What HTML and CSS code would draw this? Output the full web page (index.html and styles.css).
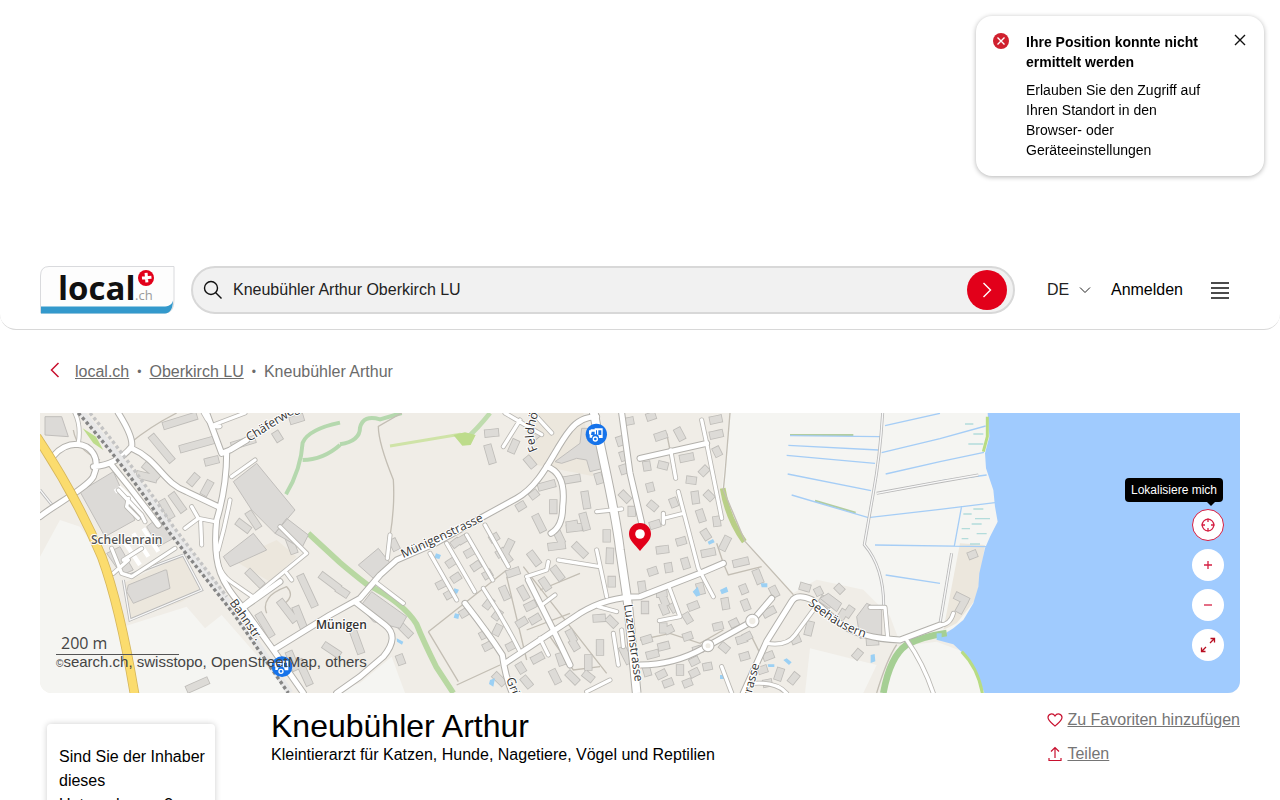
FILE: index.html
```html
<!DOCTYPE html>
<html lang="de">
<head>
<meta charset="utf-8">
<meta name="viewport" content="width=device-width, initial-scale=1">
<title>Kneubühler Arthur - local.ch</title>
<link rel="stylesheet" href="styles.css">
</head>
<body>
<div class="ad-slot"></div>

<header class="header">
  <a class="logo" href="#" aria-label="local.ch">
    <svg width="135" height="48" viewBox="0 0 135 48">
      <path d="M.5 47V10Q.5.5 9 .5h125V34q0 13-9 13Z" fill="#fdfdfd" stroke="#d9dadd"/>
      <path d="M1 40.500h122c6 0 9-2 10-6 0 8-3 13-8 13H1Z" fill="#3399cc"/>
      <text class="logo-name" x="18" y="34">local</text>
      <text class="logo-tld" x="95" y="34">.ch</text>
      <circle cx="106" cy="12" r="8" fill="#e2001a"/>
      <path d="M106.500 7v9.500M102 11.700h9.500" stroke="#fff" stroke-width="3" transform="rotate(-5 106 12)"/>
    </svg>
  </a>
  <form class="search">
    <svg class="search-icon" width="20" height="20" viewBox="0 0 20 20"><circle cx="8" cy="8" r="6.500"/><path d="m12.500 12.500 6 6"/></svg>
    <input class="search-input" type="text" aria-label="Suche" value="Kneubühler Arthur Oberkirch LU">
    <button class="search-button" type="button" aria-label="Suchen"><svg width="10" height="16" viewBox="0 0 10 16"><path d="m1.500 1 7 7-7 7"/></svg></button>
  </form>
  <label class="language">
    <select aria-label="Sprache"><option>DE</option></select>
    <svg width="12" height="8" viewBox="0 0 12 8"><path d="m1 1.500 5 5 5-5"/></svg>
  </label>
  <a class="login" href="#">Anmelden</a>
  <button class="menu" type="button" aria-label="Menü"><svg width="20" height="18" viewBox="0 0 20 18"><path d="M1 2h18M1 7h18M1 12h18M1 17h18"/></svg></button>
</header>

<main class="page">
  <nav class="breadcrumb" aria-label="Breadcrumb">
    <svg width="10" height="16" viewBox="0 0 10 16"><path d="m8.500 1-7 7 7 7"/></svg>
    <a href="#">local.ch</a><span class="dot">•</span><a href="#">Oberkirch LU</a><span class="dot">•</span><span>Kneubühler Arthur</span>
  </nav>

  <section class="map" aria-label="Karte">
    <svg class="map-canvas" viewBox="0 9 3600 840" preserveAspectRatio="xMidYMid slice">
      <defs>
        <g id="lanes">
          <path d="M105 9C120 40 120 70 115 100M250 450l55-35M215 415l30 75 30 10 130-85M220 490l45-40"/>
          <path d="M235 240l70 75 10 20M265 265l-5 25 35 35M455 290l20 35-40 30M475 325l50 10M482 335l3 70M570 270q-15 80-35 150M720 350l80 80-190 155M740 490l15 20M575 200l70-50M490 9q25 50 50 40M520 45l95-36M530 420q0 70 50 100l65 45"/>
          <path d="M1050 375l-8 70M1005 515l85 65M1170 430l80 140M1220 400l84 145M1280 375l78 135M1335 345l70 125M1330 535q60 90 110 190M1505 585l40-30M1460 500l60-20 5-25M1555 450l125 20M1670 420l30 140M1675 590l55 15M1670 305l75-8M1395 9l110 65M1440 30l-50 80M1480 9l55 60M1500 685l25 50M1640 845l70-35M1720 670l15 95M1745 660l5 50"/>
          <path d="M1892 120l15 85M1915 245l60 230 45 85M1870 325l60-15M1870 310v30M1885 525l35 95-62 12M1985 30l15 70 45 225M2045 770l30 79M2140 820q70-5 100 30M2180 700q60 10 85-25l55-75M2490 592h45l8 90M2700 645q30 0 40-35M2600 690q50 70 80 160"/>
        </g>
        <g id="roads">
          <path d="M0 320C35 290 140 235 160 200 185 140 150 105 110 103Q70 103 40 138M160 170Q230 165 275 110 280 80 235 9M215 165Q285 250 355 345M275 115C355 150 370 220 440 245L535 290M500 9L545 130 570 120 620 90M560 130Q560 230 530 330C515 480 550 520 610 595L700 720 790 849M600 600l120-85M700 720l170-105 90-50 60-70 50-45 115-50L1330 320 1430 265C1510 220 1540 120 1590 60Q1620 20 1670 20"/>
          <path d="M945 575l90 70Q1080 680 1030 740L960 800 890 849M1520 170q60 20 48 120 0 60-35 80M1275 580q70 90 112 155 10 70 30 114M1395 760L1620 610Q1700 560 1800 560L1980 490 2050 460M1465 510l75 150 50 105M1745 9l25 180 35 150M1800 145l200-45M1800 765q100 0 190-50l145-80 60-70M2110 849l70-155 75-120q15-25 60-5L2400 640Q2460 685 2580 690L2700 645"/>
        </g>
        <path id="highway" d="M1660 0C1690 160 1725 290 1740 420L1765 590 1790 849"/>
        <g id="houses">
          <path d="M380 45l80-25M340 85l50 60M320 170l30 25M430 115l90-25M505 155l20-5M455 215l10-12M495 245l12-22M370 280l20 35M400 260l25 35M300 195l40 10M600 340l20 15M630 315l20 30M745 380l15 40M660 620l30 50M725 580l35 45M770 600l20 50M785 505l35 75M850 500l40 30M630 490l30 30M585 105l50-15M710 75l5 8M760 30l20-6M750 735l15 35M780 760l25 55M860 710l30 20M450 835l45-20"/>
          <path d="M1060 398l6 12M1345 70l20-2M1345 115l10 35M1425 100l-8 18M1475 65l10 12M1465 150l10 12M1505 230l30-8M1540 280v20M1580 210l30-5M1635 255l5 30M1630 320l8 30M1590 345l12-2M1490 325l15 30M1550 365l12 25M1440 290l5-3M1480 255l4-3M1410 400l-15 30M1535 410l30-4M1610 410l20 20M1590 355l25-3M1700 370v15M1760 35l10-2M1740 90l2 6M1750 135l2 6M1750 175l2 6M1675 200l3 10M1750 255l10 10M1775 300v8M1710 425l-1 25M1715 510v10M1475 435l15 20M1510 515l10 15M1545 480l15 20M1230 460l6-4M1265 390l7-4M1285 430l7-4M1305 470l6-4M1245 505l6-4M1340 495l5-3M1200 525l6-3M1225 555l7-4M1390 540l8 18M1445 540l10 18M1410 490l18-6M1465 590l12-6M1480 630l10-6M1440 640l10-6M1375 655l-5 10M1375 610l-6 8M1350 575l-8 10M1330 675l8-4M1340 710l8-4M1410 710l8-4M1270 610l5-3M1090 655l15 15M1080 745l3 8M940 665l20 55M900 540l15 10M1590 670l8 15M1600 700l6 10M1670 625l15-1M1680 700v25M1710 630l10 10M1750 720l15 30M1645 745v25M1640 795l10 8M1560 740l5 15M1590 795l15 15M1540 790l10 20M1500 740l-15 8M1440 770l5 8M1370 800l15 15M1455 810l10 12M1245 400l4-3M1360 385l5-3M1380 430l5-3M1400 450l4-3"/>
          <path d="M1830 20l6-2M1855 80l15-5M1915 65l8 15M2020 30l15-3M2020 75l18-4M2030 122l3 6M1930 145l20-4M1865 165l8 2M1820 165l1 6M1990 185l5-5M1950 210l8 1M1830 230l1 4M1835 285l6 5M1965 255l2 15M2005 255l5 5M1900 275l2 5M1980 310l5 15M1840 345l10-3M2030 330l1 8M1995 370l5 8M1920 395l7-2M1860 420l15-2M1995 430l20-4M2060 390l-10 20M1935 455l3 10M1885 470l1 6M1835 485l6-2M1805 525l2 14M1980 530l3 12M1860 550l10-1M2090 460l25-6M2150 490l8 20M2110 535l2 5M1815 585v15M1870 565l5 12M1870 590l5 12M1900 590l3 5M1955 590l10-4M2055 575l2 12M2115 580l4 10M2200 540l5 10M2180 610l15-8M1870 650v8M1940 620l5 8M1815 690l10-3M1885 660l4-2M1940 680l6-2M2030 650l8-2M2080 640l4-2M2120 680l4-2M2100 690l10-3M1830 735l15-4M1865 710l12-3M1920 775v10M1960 755l6-3M1960 790l6-3M1860 795l8-4M1820 780l2 7M2000 770l5-1M1970 720l7-2M2050 710l6 5M2110 740l7-2M2180 740l10-4M2165 780l6-2M1880 820l8-3M1940 820l5-2M2180 820l5-1M2220 785l-5 15M2265 800l-8 10M2310 645l-5 20M2265 690l5-2M2290 530l10 3M2335 543l1 2M2350 570l15 10M2397 535l3 3M2430 600l-7 10M2410 610l-5 8M2455 730l-5 6M2490 695l15-1M2795 435l5-2M2755 560l20 10M2770 580l-10 18"/>
        </g>
        <g id="tram">
          <path fill="#fff" d="M-22-12h5v-3h12v-3h24v29H8a10 10 0 0 0-21-1h-7V0h-2Z"/>
          <path fill="#1673ea" d="M-14-8h9V2h-11ZM-1-12h3V2h-3ZM6-12h9V2H6Z"/>
          <circle cx="-3" cy="14" r="6" fill="#1673ea" stroke="#fff" stroke-width="4"/>
        </g>
      </defs>

      <rect y="9" width="3600" height="840" fill="#f0ede7"/>
      <path class="field" d="M60 330l60 20 95 130 35 170 190-60 55 65 50-40 205 234H0V440ZM1055 740l40 109H880l80-30ZM2070 9l-25 230 70 160 145 150 70-40 140 30 80 80 30 80 160-40 60-60 110-400V9ZM2310 715l200 50-40 84H2295ZM2570 710l120-15 80 30 70 124H2525Z"/>
      <path fill="#ece7dd" d="M250 520l180-85 55 105-60 35-155 55ZM580 450l130-60 60 50-80 75ZM2760 400l75 5-25 160-60 75-40 20ZM1480 9l-20 150 200 40-30-190Z"/>
      <path class="lake" d="M2843 9l3 41 2 30-13 50 3 45 22 65 5 50 8 45-23 45-15 35-17 75-3 40-15 50-30 50-30 25-40 25-8 10 48 13 45 42 25 45 23 59H3600V9Z"/>

      <g class="green">
        <path d="M900 38q-95 20-112 60-5 80-50 155M788 150q60 0 112-45M900 103q60-10 60-50 10-40 60-25L1085 9" stroke="#b5d8ae" stroke-width="12"/>
        <path d="M1350 9q-40 50-70 75" stroke="#bfdcae" stroke-width="14"/>
        <path d="M1050 108l210-35 30 10" stroke="#cfe3a7" stroke-width="9"/>
        <path d="M805 370l95 88q35 30 80 65 110 55 150 120 20 50 60 130l50 76" stroke="#b8d8a2" stroke-width="17"/>
        <path d="M2048 235q15 90 65 160" stroke="#b9cf87" stroke-width="17"/>
        <path d="M2530 849q20-110 70-145 50-25 120-35" stroke="#a5cf94" stroke-width="20"/>
        <path d="M2842 20v60l-12 45M2765 725q50 50 63 130" stroke="#b8dc83" stroke-width="9"/>
        <path d="M2250 75h190M2325 272l122 36" stroke="#b2cda0" stroke-width="6"/>
      </g>
      <path fill="#bddc8b" d="M1240 75l35-8 32 8-15 30-25 2ZM128 55l40 25 22 40-30-20Z"/>

      <path class="ditch" d="M2250 77l270 3M2245 106l270 14M2240 136l265 24M2243 192l250 50M2255 255l230 68 215-25 165-20M2535 47L2700 10M2525 128l175-42 137-38M2537 192L2700 155l132-28M2505 405l335 5M2537 495l163 25M2765 288l-22 120M2700 213l140-18"/>
      <path class="reeds" d="M2775 42h25M2800 72h30M2785 102h45M2800 297h30M2770 312h25M2805 326h45M2795 342h30M2765 356h25M2810 371h30M2765 386h20M2790 402h30"/>

      <path class="trail" d="M1085 9l-70 40q0 50 45 160 5 80-10 170M1165 665l235-185M1165 665l90 150M1250 825l130-60M2070 9l-15 180-5 50 65 155 145 160M270 100q60-50 140-91M100 60q10 60 80 90M680 610q-20-50 60-80 30 30-20 60M1400 500l60 250M1450 470l250 320M1500 540l120-50M1460 660l130-50M1530 680l70 100 80-10M2130 670l30 60M1800 690l90-20 90 30 70-40M1880 70l10 50M2030 400l20 60 15 35 100-25M2510 849q30-100 60-145"/>
      <path class="track-casing" d="M2528 9q-8 130-28 240l-27 155q60 70 58 190M2510 250l190-35 115-20M2735 430l-35 210M250 510l20 120 215-90-55-105-160 60M0 240l40 50"/>
      <path class="track" d="M2528 9q-8 130-28 240l-27 155q60 70 58 190M2510 250l190-35 115-20M2735 430l-35 210M250 510l20 120 215-90-55-105-160 60M0 240l40 50"/>

      <use href="#houses" class="house-edge"/>
      <use href="#houses" class="house"/>
      <path class="block" d="M120 245l100-60 65 145-90 50ZM15 20l50 0 20 60-70-5ZM200 430l40-20 40 70-35 15ZM320 350l45-35 35 70-45 25ZM265 525l110-45 5 0 10 55-110 45-20-35ZM580 215l70-55 115 140-60 70-70-70ZM705 370l35-45 65 50-20 40ZM550 440l90-70 40 50-110 50ZM955 465l60-50 40 50-55 40ZM960 590l35-45 105 75-20 35-80-20ZM1545 155l75-55 5-45 35 0 30 70 0 50-40 10-10-35-30-5-45 15ZM2340 565l25-15 40 30-15 25ZM2450 620l30-40 45 20v75l-65 10Z"/>
      <path class="parking" d="M225 245l15-10 90 80M250 390l50 75M280 370l45 70M310 355l45 70"/>
      <path fill="#9bd0f4" d="M2003 395l16-8 5 10-17 7ZM1958 545l15-15 8 25-12 5ZM2040 540l20-10 5 15-20 8ZM2162 520h20v12h-17ZM2230 750l10-5 15 12-8 8ZM2183 763h20v8h-18ZM2492 735l12-3 2 22-14 5ZM2690 670h15v20h-15ZM1188 430l15 5-5 12-15-3ZM1243 535l14 4-6 12-12-3ZM1245 610l13 3-3 14-14-4ZM1070 685l20 10-4 9-15-9ZM1350 810l15-5-5 25-13-8ZM2040 795h12v12h-12Z"/>

      <use href="#lanes" class="lane-edge"/>
      <use href="#roads" class="road-edge"/>
      <use href="#highway" class="highway-edge"/>
      <use href="#lanes" class="lane"/>
      <use href="#roads" class="road"/>
      <use href="#highway" class="highway"/>
      <g class="roundabout-edge"><circle cx="2004" cy="707" r="12"/><circle cx="2137" cy="633" r="14"/></g>
      <g class="roundabout"><circle cx="2004" cy="707" r="12"/><circle cx="2137" cy="633" r="14"/></g>

      <path class="rail-bed" d="M125 9Q260 160 400 370L590 610 750 849"/>
      <path class="rail" d="M115 9Q250 160 390 370L580 610 745 849"/>
      <path class="rail second" d="M150 9Q275 160 400 350l160 210"/>
      <path class="main-edge" d="M-10 80Q110 260 185 440 240 590 285 860"/>
      <path class="main" d="M-10 80Q110 260 185 440 240 590 285 860"/>

      <g class="label">
        <text class="place grey" x="153" y="402">Schellenrain</text>
        <text class="place" x="828" y="657">Münigen</text>
        <text transform="translate(628 95) rotate(-32)">Chäferweg</text>
        <text transform="translate(568 578) rotate(55)">Bahnstr.</text>
        <text transform="translate(1090 445) rotate(-25)">Münigenstrasse</text>
        <path id="field-road" class="guide" d="M1494 120Q1474 80 1486 40L1520-80"/>
        <text><textPath href="#field-road">Feldhöfli</textPath></text>
        <text transform="translate(1752 584) rotate(82)">Luzernstrasse</text>
        <text transform="translate(1398 808) rotate(68)">Grünau</text>
        <text transform="translate(2112 937) rotate(-75)">Seestrasse</text>
        <path id="lake-road" class="guide" d="M2303 583Q2390 660 2490 688"/>
        <text><textPath href="#lake-road">Seehäusern</textPath></text>
      </g>

      <g transform="translate(1669 73)"><circle r="32" fill="#1673ea"/><use href="#tram"/></g>
      <g transform="translate(726 770)"><circle r="31" fill="#1673ea"/><use href="#tram"/></g>
    </svg>

    <svg class="pin" width="24" height="30" viewBox="0 0 24 30"><path fill="#e2001a" d="M12 1C5.800 1 1 5.700 1 12c0 6.500 6 10.500 11 17 5-6.500 11-10.500 11-17C23 5.700 18.200 1 12 1Z"/><circle cx="12" cy="12" r="4.800" fill="#fff"/></svg>

    <div class="map-info">
      <div class="scale">200 m</div>
      <div class="attribution"><small>©</small>search.ch, swisstopo, OpenStreetMap, others</div>
    </div>

    <div class="map-controls">
      <div class="tooltip" role="tooltip">Lokalisiere mich</div>
      <button class="round active" type="button" aria-label="Lokalisiere mich"><svg width="16" height="16" viewBox="0 0 16 16"><circle cx="8" cy="8" r="5.800"/><path d="M8 1.500v3.500M8 11v3.500M1.500 8h3.500M11 8h3.500"/></svg></button>
      <button class="round" type="button" aria-label="Vergrössern"><svg width="16" height="16" viewBox="0 0 16 16"><path d="M8 4v8M4 8h8"/></svg></button>
      <button class="round" type="button" aria-label="Verkleinern"><svg width="16" height="16" viewBox="0 0 16 16"><path d="M4 8h8"/></svg></button>
      <button class="round expand" type="button" aria-label="Vollbild"><svg width="16" height="16" viewBox="0 0 16 16"><path d="M10.500 1.500h4V5.500M14.500 1.500 10 6M1.500 10.500v4h4M1.500 14.500 6 10"/></svg></button>
    </div>
  </section>

  <div class="details">
    <aside class="owner-card">Sind Sie der Inhaber dieses Unternehmens?</aside>
    <div class="heading">
      <h1>Kneubühler Arthur</h1>
      <p>Kleintierarzt für Katzen, Hunde, Nagetiere, Vögel und Reptilien</p>
    </div>
    <div class="actions">
      <a href="#"><svg width="16" height="14" viewBox="0 0 16 14"><path d="M8 13C4 9.500 1 7.500 1 4.500 1 1 5.800-.5 8 3c2.200-3.500 7-2 7 1.500C15 7.500 12 9.500 8 13Z"/></svg><span>Zu Favoriten hinzufügen</span></a>
      <a href="#"><svg width="16" height="16" viewBox="0 0 16 16"><path d="M8 12V1.500M4 5.500l4-4 4 4M2 12v2.500h12V12"/></svg><span>Teilen</span></a>
    </div>
  </div>
</main>

<div class="toast" role="alert">
  <svg class="toast-icon" width="16" height="16" viewBox="0 0 16 16"><circle cx="8" cy="8" r="8" fill="#d0202e"/><path d="m4.500 4.500 7 7M11.500 4.500l-7 7" stroke="#fff" stroke-width="1.400"/></svg>
  <div class="toast-text">
    <strong>Ihre Position konnte nicht ermittelt werden</strong>
    <p>Erlauben Sie den Zugriff auf Ihren Standort in den Browser- oder Geräteeinstellungen</p>
  </div>
  <button class="toast-close" type="button" aria-label="Schliessen"><svg width="12" height="12" viewBox="0 0 12 12"><path d="m1 1 10 10M11 1 1 11"/></svg></button>
</div>
</body>
</html>
```

FILE: styles.css
```css
* { box-sizing: border-box; }
body {
  margin: 0;
  height: 100vh;
  overflow: hidden;
  font: 16px/24px "Liberation Sans", Arial, sans-serif;
  color: #000;
  background: #fff;
}
button { border: 0; padding: 0; background: none; cursor: pointer; }
svg { display: block; flex: none; fill: none; }

.ad-slot { height: 250px; }

.header {
  display: flex;
  align-items: center;
  height: 80px;
  padding: 0 50px 0 40px;
  border-bottom: 1px solid #d8d8d8;
  border-radius: 0 0 16px 16px;
}
.logo { margin-right: 16px; }
.logo-name { font: 700 33px "Open Sans", sans-serif; fill: #111; }
.logo-tld { font: 13px "Open Sans", sans-serif; fill: #9a9a9a; }
.search {
  flex: 1;
  display: flex;
  align-items: center;
  height: 48px;
  padding: 0 6px 0 10px;
  border: 2px solid #d8d8d8;
  border-radius: 24px;
  background: #f1f1f1;
}
.search-icon { stroke: #111; stroke-width: 1.4; }
.search-input {
  flex: 1;
  min-width: 0;
  padding: 0 10px;
  border: 0;
  outline: 0;
  background: none;
  font: inherit;
  color: #222;
}
.search-button {
  display: grid;
  place-items: center;
  width: 40px;
  height: 40px;
  border-radius: 50%;
  background: #e2001a;
}
.search-button svg { stroke: #fff; stroke-width: 1.4; }
.language { display: flex; align-items: center; gap: 8px; margin-left: 32px; }
.language select {
  width: 24px;
  padding: 0;
  border: 0;
  appearance: none;
  background: none;
  font: inherit;
  color: #222;
}
.language svg { stroke: #222; }
.login { margin-left: 20px; color: #000; text-decoration: none; }
.menu { margin-left: 27px; }
.menu svg { stroke: #111; stroke-width: 1.5; }

.page { padding: 0 40px; }
.breadcrumb {
  display: flex;
  align-items: center;
  height: 83px;
  padding-left: 10px;
  color: #6b6b6b;
}
.breadcrumb svg { margin: 0 15px 4px 0; stroke: #c8102e; stroke-width: 1.5; }
.breadcrumb a { color: inherit; }
.breadcrumb .dot { padding: 0 8px; font-size: 12px; }

.map { position: relative; height: 280px; border-radius: 0 0 12px 12px; }
.map-canvas { width: 100%; height: 100%; border-radius: inherit; overflow: hidden; }
.field { fill: #f5f5f2; }
.lake { fill: #a0cbfe; }
.ditch { stroke: #a5cdf6; stroke-width: 4; }
.reeds { stroke: #b3dcdb; stroke-width: 4; }
.trail { stroke: #c3beb4; stroke-width: 4; }
.track-casing { stroke: #b9b9b9; stroke-width: 9; }
.track { stroke: #f8f8f8; stroke-width: 4; }
.house-edge, .house { stroke-linecap: square; }
.house-edge { stroke: #bfbdb9; stroke-width: 25; }
.house { stroke: #dddbd7; stroke-width: 20; }
.block { fill: #dcdad7; stroke: #c0bebb; stroke-width: 3; }
.parking { stroke: #fff; stroke-width: 13; }
.lane-edge, .lane, .road-edge, .road { stroke-linecap: round; stroke-linejoin: round; }
.lane-edge { stroke: #b9b7b2; stroke-width: 15; }
.lane { stroke: #fff; stroke-width: 10; }
.road-edge { stroke: #b3b1ac; stroke-width: 21; }
.road { stroke: #fff; stroke-width: 15; }
.highway-edge { stroke: #b3b1ac; stroke-width: 29; }
.highway { stroke: #fff; stroke-width: 23; }
.roundabout-edge { stroke: #b3b1ac; stroke-width: 15; }
.roundabout { fill: #efece5; stroke: #fff; stroke-width: 9; }
.rail-bed { stroke: #e8e8e8; stroke-width: 20; }
.rail { stroke: #858585; stroke-width: 10; stroke-dasharray: 10 8; }
.rail.second { stroke: #c4c4c4; }
.main-edge { stroke: #d6b75d; stroke-width: 29; }
.main { stroke: #fbdc6e; stroke-width: 24; }
.label {
  font: 36px "Open Sans", "Noto Sans", sans-serif;
  fill: #333;
  stroke: #fff;
  stroke-width: 6;
  stroke-linejoin: round;
  paint-order: stroke;
}
.label .guide { fill: none; stroke: none; }
.label .place { font-weight: 600; }
.label .grey { fill: #555; }

.pin { position: absolute; left: 50%; top: 50%; margin: -31px 0 0 -12px; }
.map-info { position: absolute; left: 16px; bottom: 22px; color: #444; }
.scale {
  width: 123px;
  padding-left: 5px;
  border-bottom: 1px solid #555;
  font: 16px/22px "Open Sans", sans-serif;
}
.attribution { font-size: 15px; line-height: 14px; white-space: nowrap; }
.attribution small { font-size: 10px; }
.map-controls {
  position: absolute;
  right: 16px;
  bottom: 32px;
  display: flex;
  flex-direction: column;
  gap: 8px;
}
.round {
  display: grid;
  place-items: center;
  width: 32px;
  height: 32px;
  border-radius: 50%;
  background: #fff;
}
.round svg { stroke: #d51f43; stroke-width: 1.3; }
.round.active { border: 1px solid #d51f43; }
.round.expand svg { stroke: #b80d20; }
.tooltip {
  position: absolute;
  right: 1px;
  bottom: 159px;
  padding: 0 6px;
  border-radius: 4px;
  background: #000;
  color: #fff;
  font-size: 12px;
  line-height: 24px;
  white-space: nowrap;
}
.tooltip::after {
  content: "";
  position: absolute;
  right: 8px;
  top: 100%;
  border: 4px solid transparent;
  border-top-color: #000;
  border-bottom: 0;
}

.details { display: flex; align-items: flex-start; }
.owner-card {
  width: 168px;
  min-height: 120px;
  margin: 31px 56px 0 7px;
  padding: 21px 8px 20px 12px;
  border-radius: 4px;
  background: #fff;
  box-shadow: 0 0 6px rgba(0, 0, 0, .2);
}
.heading { flex: 1; padding-top: 15px; }
.heading h1 { margin: 0; font-size: 32px; line-height: 36px; font-weight: 400; }
.heading p { margin: 0; line-height: 22px; }
.actions { display: flex; flex-direction: column; gap: 10px; padding-top: 15px; }
.actions a { display: flex; align-items: center; gap: 4px; color: #757575; text-decoration: none; }
.actions span { text-decoration: underline; }
.actions svg { stroke: #c8102e; stroke-width: 1.2; }

.toast {
  position: fixed;
  top: 16px;
  right: 16px;
  display: flex;
  align-items: flex-start;
  width: 288px;
  padding: 16px 18px 16px 17px;
  border-radius: 16px;
  background: #fff;
  box-shadow: 0 1px 5px rgba(0, 0, 0, .3);
  font-size: 14px;
  line-height: 20px;
}
.toast-icon { margin: 1px 17px 0 0; }
.toast-text { width: 180px; }
.toast-text p { margin: 8px 0 0; }
.toast-close { margin: 2px 0 0 auto; }
.toast-close svg { stroke: #111; stroke-width: 1.4; }
```
